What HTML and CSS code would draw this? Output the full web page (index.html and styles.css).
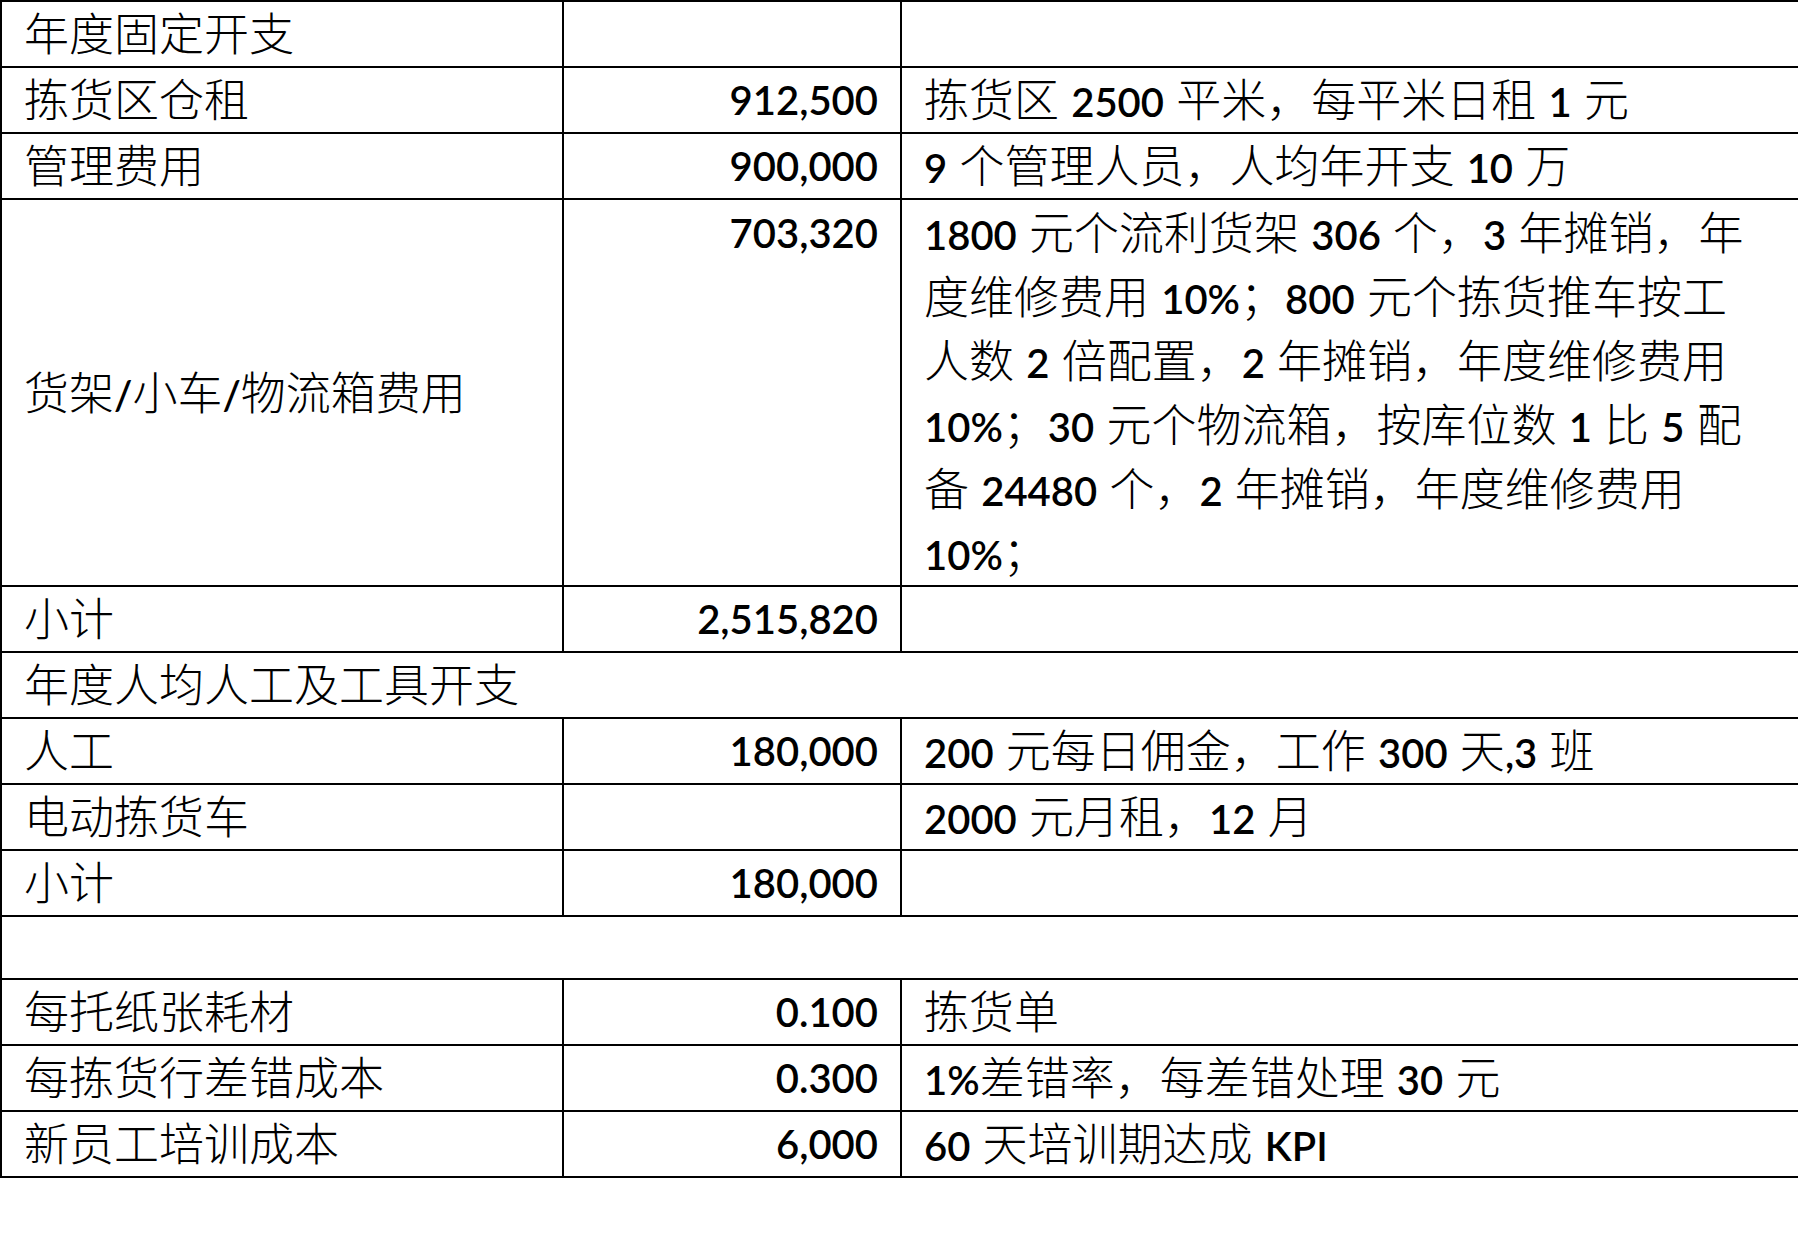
FILE: index.html
```html
<!DOCTYPE html>
<html lang="zh-CN">
<head>
<meta charset="utf-8">
<title>年度开支</title>
<link rel="stylesheet" href="styles.css">
</head>
<body>
<table class="cost">
  <colgroup>
    <col class="c-name">
    <col class="c-num">
    <col class="c-note">
  </colgroup>
  <tbody>
    <tr>
      <td>年度固定开支</td>
      <td class="num"></td>
      <td></td>
    </tr>
    <tr>
      <td>拣货区仓租</td>
      <td class="num">912,500</td>
      <td>拣货区 <span class="lat">2500</span> 平米，每平米日租 <span class="lat">1</span> 元</td>
    </tr>
    <tr>
      <td>管理费用</td>
      <td class="num">900,000</td>
      <td><span class="lat">9</span> 个管理人员，人均年开支 <span class="lat">10</span> 万</td>
    </tr>
    <tr class="tall">
      <td class="mid">货架<span class="lat">/</span>小车<span class="lat">/</span>物流箱费用</td>
      <td class="num top">703,320</td>
      <td class="top"><span class="lat">1800</span> 元个流利货架 <span class="lat">306</span> 个，<span class="lat">3</span> 年摊销，年<br>度维修费用 <span class="lat">10%</span>；<span class="lat">800</span> 元个拣货推车按工<br>人数 <span class="lat">2</span> 倍配置，<span class="lat">2</span> 年摊销，年度维修费用<br><span class="lat">10%</span>；<span class="lat">30</span> 元个物流箱，按库位数 <span class="lat">1</span> 比 <span class="lat">5</span> 配<br>备 <span class="lat">24480</span> 个，<span class="lat">2</span> 年摊销，年度维修费用<br><span class="lat">10%</span>；</td>
    </tr>
    <tr>
      <td>小计</td>
      <td class="num">2,515,820</td>
      <td></td>
    </tr>
    <tr>
      <td colspan="3">年度人均人工及工具开支</td>
    </tr>
    <tr>
      <td>人工</td>
      <td class="num">180,000</td>
      <td><span class="lat">200</span> 元每日佣金，工作 <span class="lat">300</span> 天<span class="lat">,3</span> 班</td>
    </tr>
    <tr>
      <td>电动拣货车</td>
      <td class="num"></td>
      <td><span class="lat">2000</span> 元月租，<span class="lat">12</span> 月</td>
    </tr>
    <tr>
      <td>小计</td>
      <td class="num">180,000</td>
      <td></td>
    </tr>
    <tr class="blank">
      <td colspan="3"></td>
    </tr>
    <tr>
      <td>每托纸张耗材</td>
      <td class="num">0.100</td>
      <td>拣货单</td>
    </tr>
    <tr>
      <td>每拣货行差错成本</td>
      <td class="num">0.300</td>
      <td><span class="lat">1%</span>差错率，每差错处理 <span class="lat">30</span> 元</td>
    </tr>
    <tr>
      <td>新员工培训成本</td>
      <td class="num">6,000</td>
      <td><span class="lat">60</span> 天培训期达成 <span class="lat">KPI</span></td>
    </tr>
  </tbody>
</table>
</body>
</html>
```

FILE: styles.css
```css
html, body {
  margin: 0;
  padding: 0;
  background: #ffffff;
  overflow: hidden;
}

body {
  font-family: Lato, "Noto Sans CJK SC", sans-serif;
  font-size: 45px;
  font-weight: 300;
  color: #000000;
}

.cost {
  border-collapse: collapse;
  table-layout: fixed;
  width: 1840px;
}

.c-name { width: 562px; }
.c-num { width: 338px; }
.c-note { width: 940px; }

.cost td {
  border: 2px solid #000000;
  padding: 0 22px;
  line-height: 64px;
  height: 64px;
  vertical-align: middle;
  white-space: nowrap;
  overflow: hidden;
}

.cost td.num {
  text-align: right;
  font-size: 40px;
  font-weight: 600;
}

.cost td.top {
  vertical-align: top;
  padding-top: 1px;
}

.cost td.mid {
  vertical-align: middle;
}

.lat {
  font-size: 40px;
  font-weight: 600;
  line-height: 0;
}

.cost tr.blank td {
  height: 61px;
}
```
